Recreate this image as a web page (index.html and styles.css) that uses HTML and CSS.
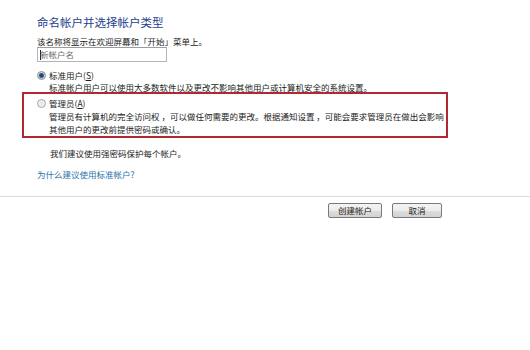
FILE: index.html
```html
<!DOCTYPE html>
<html>
<head>
    <title>命名帐户并选择帐户类型</title>
    <link rel="stylesheet" href="styles.css">
</head>
<body>
<div class="account-page">
    <div class="account-form">
        <div class="main-title">命名帐户并选择帐户类型</div>
        <div class="hint">该名称将显示在欢迎屏幕和「开始」菜单上。</div>
        <div class="name-box"><span class="caret"></span>新帐户名</div>

        <div class="option">
            <span class="radio checked"></span>
            <span class="option-label">标准用户(<u>S</u>)</span>
        </div>
        <div class="option-desc">标准帐户用户可以使用大多数软件以及更改不影响其他用户或计算机安全的系统设置。</div>

        <div class="admin-block">
            <div class="option">
                <span class="radio"></span>
                <span class="option-label">管理员(<u>A</u>)</span>
            </div>
            <div class="option-desc">管理员有计算机的完全访问权 ，可以做任何需要的更改。根据通知设置 ，可能会要求管理员在做出会影响<br>其他用户的更改前提供密码或确认。</div>
        </div>

        <div class="note">我们建议使用强密码保护每个帐户。</div>
        <a class="why-link">为什么建议使用标准帐户?</a>
    </div>
    <div class="footer">
        <div class="btn btn-create">创建帐户</div>
        <div class="btn btn-cancel">取消</div>
    </div>
</div>
</body>
</html>
```

FILE: styles.css
```css
* {
    box-sizing: border-box;
}
body {
    margin: 0;
    background-color: #fff;
    font-family: "Noto Sans CJK SC", "Noto Sans", sans-serif;
    font-size: 8.5px;
    line-height: 13px;
    color: #1b1b1b;
}
.account-form {
    padding: 14px 0 0 37px;
}
.main-title {
    font-size: 11.5px;
    line-height: 16px;
    color: #24408c;
}
.hint {
    margin-top: 5px;
    line-height: 12px;
}
.name-box {
    display: flex;
    align-items: center;
    width: 130px;
    height: 15px;
    border: 1px solid #b3b5bb;
    border-top-color: #9a9ca2;
    padding-left: 2px;
    color: #6a6a6a;
    line-height: 13px;
}
.caret {
    width: 1px;
    height: 10px;
    background-color: #222;
    margin-right: -1px;
}
.option {
    display: flex;
    align-items: center;
    margin-top: 7px;
    line-height: 12px;
}
.radio {
    width: 9px;
    height: 9px;
    border-radius: 50%;
    border: 1px solid #a0a2a4;
    background: radial-gradient(circle, #e3e4e5 0, #f7f7f7 4px);
    margin-right: 3px;
}
.radio.checked {
    border-color: #8a8c8e;
    background: radial-gradient(circle, #1c3656 0, #2f5b86 2px, #c9d3dc 3px, #eeeeee 4px);
}
.option-label u {
    text-decoration-thickness: 1px;
    text-underline-offset: 1px;
}
.option-desc {
    padding-left: 12px;
}
.admin-block {
    width: 426px;
    margin: -2px 0 0 -15px;
    padding: 1px 0 0 13px;
    border: 2px solid #ad2a32;
}
.admin-block .option {
    margin-top: 2px;
    line-height: 13px;
}
.note {
    margin-top: 9px;
    padding-left: 13px;
}
.why-link {
    display: block;
    margin-top: 8px;
    color: #2a72a8;
    cursor: pointer;
}
.footer {
    display: flex;
    justify-content: flex-end;
    gap: 10px;
    margin-top: 15px;
    padding: 6px 88px 0 0;
    border-top: 1px solid #dcdcdc;
}
.btn {
    height: 15px;
    border: 1px solid #7a7a7a;
    border-radius: 2px;
    background: linear-gradient(#f4f4f4 0, #ececec 50%, #dedede 51%, #d2d2d2 100%);
    text-align: center;
    line-height: 13px;
    color: #1b1b1b;
}
.btn-create {
    width: 54px;
}
.btn-cancel {
    width: 50px;
}
```
